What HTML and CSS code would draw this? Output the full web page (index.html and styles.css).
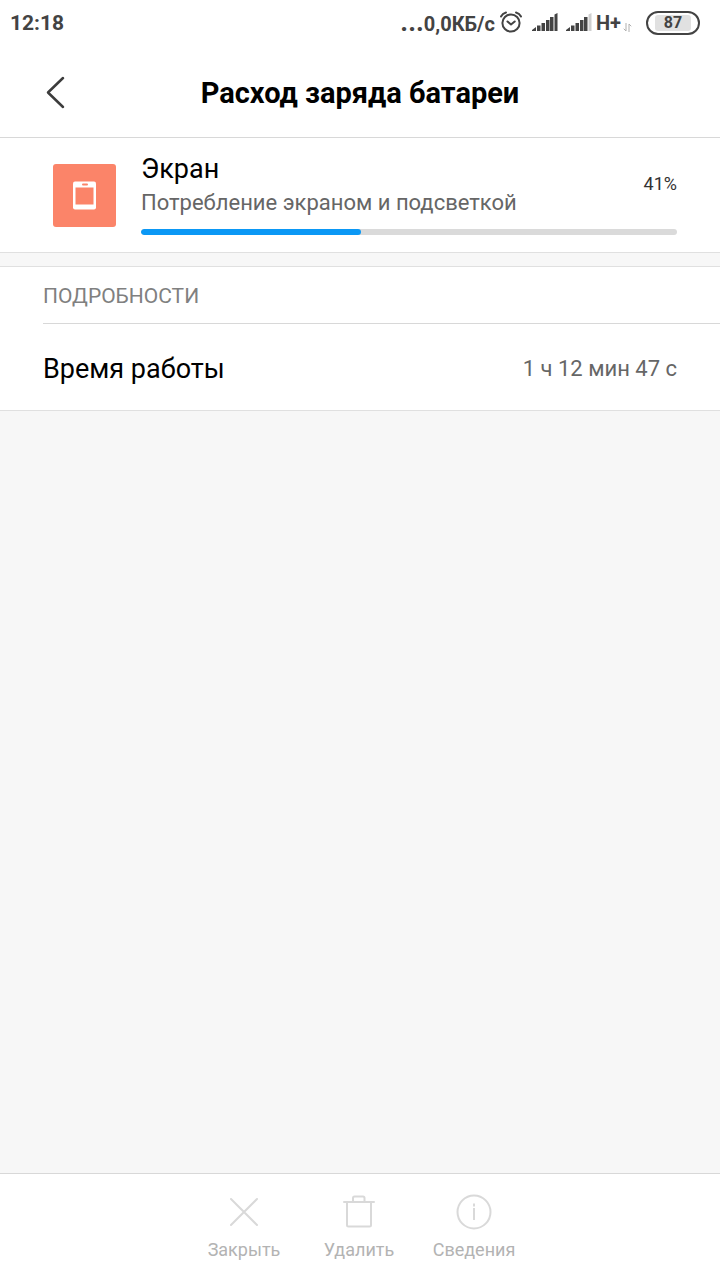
FILE: index.html
```html
<!DOCTYPE html>
<html lang="ru">
  <head>
    <meta charset="utf-8">
    <meta name="viewport" content="width=device-width, initial-scale=1">
    <title>Расход заряда батареи</title>
    <link rel="stylesheet" href="styles.css">
  </head>
  <body>
    <div class="status-bar">
      <span class="clock">12:18</span>
      <div class="indicators">
        <span class="speed"><span class="dots">...</span>0,0КБ/с</span>
        <svg class="alarm" width="22" height="22" viewBox="0 0 22 22">
          <circle cx="11" cy="12" r="8.6" />
          <path d="M7.5 10.5l3.5 3 3.7-3M1 5.5Q2.500 2.500 6 1.500M21 5.500Q19.500 2.500 16 1.500" />
        </svg>
        <svg class="signal" width="26" height="18" viewBox="0 0 26 18">
          <path d="M0 18v-1l4-3v4zM5 12.500h3.500V18H5zM9.500 10h3.500v8H9.500zM14 7h3.500v11H14zM18 4h3.500v14H18zM22.500 1.500l3-1.500v18h-3z" />
        </svg>
        <svg class="signal" width="26" height="18" viewBox="0 0 26 18">
          <path d="M0 18v-1l4-3v4zM5 12.500h3.500V18H5zM9.500 10h3.500v8H9.500zM14 7h3.500v11H14zM18 4h3.500v14H18z" />
          <path class="weak" d="M22.500 1.500l3-1.500v18h-3z" />
        </svg>
        <span class="network">H+</span>
        <svg class="traffic" width="9" height="9" viewBox="0 0 9 9">
          <path d="M3 0v8L1 6M6 9V1l2 2" />
        </svg>
        <span class="battery"><span class="level">87</span></span>
      </div>
    </div>

    <header class="header">
      <button class="back" aria-label="Назад">
        <svg width="20" height="34" viewBox="0 0 20 34">
          <path d="M17 3L2 17.500 17 32" />
        </svg>
      </button>
      <h1>Расход заряда батареи</h1>
    </header>

    <main>
      <section class="card usage">
        <svg class="app-icon" width="63" height="63" viewBox="0 0 63 63">
          <rect width="63" height="63" rx="3" fill="#fb8469" />
          <rect x="20" y="17.500" width="23" height="28" rx="2" fill="#fff" />
          <rect x="22.500" y="23.500" width="18" height="17" fill="#fb8469" />
          <rect x="29" y="19.500" width="6" height="2" rx="1" fill="#fb8469" />
        </svg>
        <div class="usage-body">
          <div class="usage-text">
            <div>
              <h2 id="usageName">Экран</h2>
              <p>Потребление экраном и подсветкой</p>
            </div>
            <span class="percent">41%</span>
          </div>
          <progress value="41" max="100" aria-labelledby="usageName"></progress>
        </div>
      </section>

      <section class="card details">
        <h3>ПОДРОБНОСТИ</h3>
        <dl class="row">
          <dt>Время работы</dt>
          <dd>1 ч 12 мин 47 с</dd>
        </dl>
      </section>
    </main>

    <footer class="actions">
      <button disabled>
        <svg width="36" height="36" viewBox="0 0 36 36">
          <path d="M5 5l26 26M31 5L5 31" />
        </svg>
        Закрыть
      </button>
      <button disabled>
        <svg width="36" height="36" viewBox="0 0 36 36">
          <path d="M3 8h30M6 8v23q0 1.500 1.500 1.500h21q1.500 0 1.500-1.500V8M12 8V4q0-1.500 1.500-1.500h8.500q1.500 0 1.500 1.500v4" />
        </svg>
        Удалить
      </button>
      <button disabled>
        <svg class="info" width="36" height="36" viewBox="0 0 36 36">
          <circle cx="18" cy="18" r="16.500" />
          <path d="M18 14v12M18 9.500v3" />
        </svg>
        Сведения
      </button>
    </footer>
  </body>
</html>
```

FILE: styles.css
```css
* {
  box-sizing: border-box;
}

body {
  margin: 0;
  min-height: 100vh;
  display: flex;
  flex-direction: column;
  background: #f7f7f7;
  color: #000;
  font-family: Roboto, "Noto Sans", sans-serif;
}

h1,
h2,
h3,
p,
dl,
dd {
  margin: 0;
  font-weight: 400;
}

button {
  padding: 0;
  border: none;
  background: none;
  font-family: inherit;
}

svg {
  display: block;
  flex: none;
  fill: none;
  stroke-linecap: round;
  stroke-linejoin: round;
}

/* status bar */

.status-bar {
  display: flex;
  justify-content: space-between;
  align-items: center;
  height: 46px;
  padding: 0 20px 0 10px;
  background: #fff;
  color: #434343;
  font-size: 20px;
  font-weight: 700;
}

.clock {
  font-size: 21px;
}

.indicators {
  display: flex;
  align-items: center;
}

.speed {
  line-height: 24px;
}

.dots {
  font-size: 27px;
  line-height: 24px;
}

.alarm {
  margin: 0 10px 2px 5px;
  stroke: #434343;
  stroke-width: 2;
}

.signal {
  margin: 0 8px 2px 0;
  fill: #434343;
}

.signal .weak {
  fill: #cfcfcf;
}

.network {
  margin-left: -4px;
}

.traffic {
  margin: 8px 14px 0 2px;
  stroke: #b0b0b0;
}

.battery {
  width: 54px;
  height: 24px;
  padding: 2px 7px;
  border: 2px solid #434343;
  border-radius: 12px;
}

.level {
  display: block;
  border-radius: 3px;
  background: #e1e1e1;
  font-size: 16px;
  line-height: 16px;
  text-align: center;
}

/* title */

.header {
  display: grid;
  grid-template-columns: 72px 1fr 72px;
  align-items: center;
  height: 92px;
  border-bottom: 1px solid #d8d8d8;
  background: #fff;
}

.header h1 {
  padding-top: 2px;
  font-size: 29px;
  font-weight: 700;
  text-align: center;
}

.back {
  justify-self: end;
  padding: 0 6px;
  cursor: pointer;
}

.back svg {
  stroke: #3c3c3c;
  stroke-width: 2.5;
}

/* content */

main {
  flex: 1;
}

.card {
  border-bottom: 1px solid #e0e0e0;
  background: #fff;
}

.usage {
  display: flex;
  align-items: flex-start;
  gap: 25px;
  padding: 14px 43px 17px 53px;
}

.app-icon {
  margin-top: 12px;
}

.usage-body {
  flex: 1;
}

.usage-text {
  display: flex;
  justify-content: space-between;
  align-items: center;
}

.usage h2 {
  font-size: 27px;
  line-height: 34px;
}

.usage p {
  color: #666;
  font-size: 22px;
  line-height: 34px;
}

.percent {
  padding-bottom: 6px;
  color: #333;
  font-size: 18px;
}

progress {
  display: block;
  width: 100%;
  height: 6px;
  margin-top: 9px;
  border: none;
  border-radius: 3px;
  overflow: hidden;
  background: #dadada;
  appearance: none;
}

progress::-webkit-progress-bar {
  background: #dadada;
}

progress::-webkit-progress-value {
  border-radius: 3px;
  background: #0b98f5;
}

.details {
  margin-top: 13px;
  padding-left: 43px;
  border-top: 1px solid #e0e0e0;
}

.details h3 {
  padding-top: 2px;
  border-bottom: 1px solid #d8d8d8;
  color: #808080;
  font-size: 21px;
  line-height: 54px;
}

.row {
  display: flex;
  justify-content: space-between;
  align-items: center;
  height: 86px;
  padding: 3px 43px 0 0;
}

.row dt {
  font-size: 27px;
}

.row dd {
  color: #666;
  font-size: 22px;
}

/* bottom actions */

.actions {
  display: flex;
  justify-content: center;
  height: 107px;
  padding: 20px 2px 0 0;
  border-top: 1px solid #d8d8d8;
  background: #fff;
}

.actions button {
  display: flex;
  flex-direction: column;
  align-items: center;
  gap: 8px;
  width: 115px;
  color: #b3b3b3;
  font-size: 18px;
  line-height: 24px;
}

.actions svg {
  stroke: #d9d9d9;
  stroke-width: 2;
}

.actions .info {
  stroke-linecap: butt;
}
```
